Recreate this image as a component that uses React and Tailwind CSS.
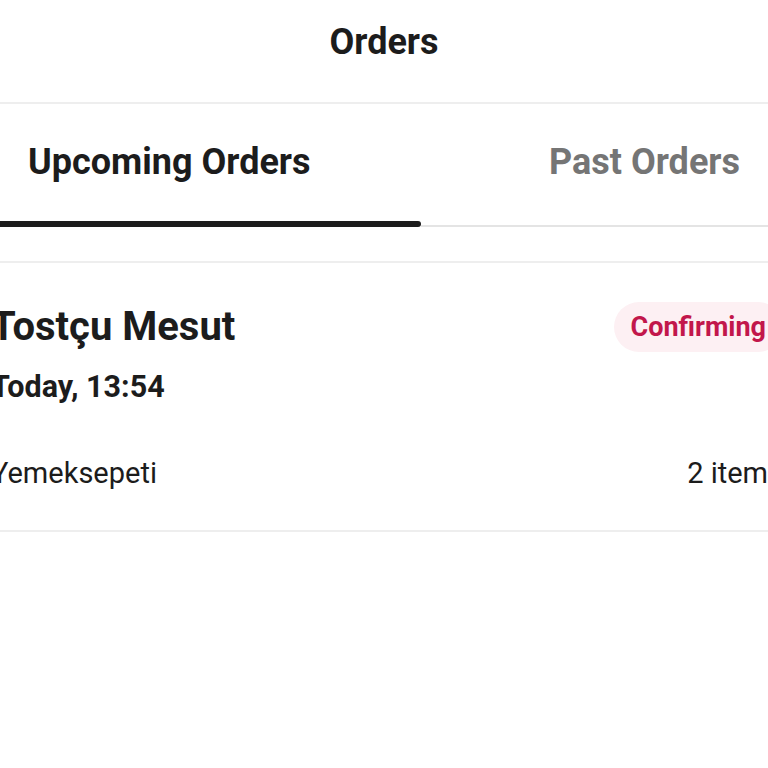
const OrderCard = ({ order }) => {
  return (
    <div className="border-b-2 border-[#eeeeee] pt-[39px] pb-[40px] ml-[-9px] mr-[-15px]">
      <div className="flex items-center justify-between">
        <span className="text-[40px] leading-[48px] font-bold text-[#1c1c1c]">{order.restaurant}</span>
        <span className="flex h-[50px] items-center rounded-full bg-[#fdf0f3] px-[17px] text-[27px] font-bold text-[#c2174b]">
          {order.status}
        </span>
      </div>
      <div className="mt-[17px] text-[30.5px] leading-[36px] font-bold text-[#1c1c1c]">{order.time}</div>
      <div className="mt-[51px] flex items-center justify-between text-[29px] leading-[34px] text-[#1c1c1c]">
        <span>{order.source}</span>
        <span>{order.items} items</span>
      </div>
    </div>
  );
};

const App = () => {
  const order = {
    restaurant: 'Tostçu Mesut',
    status: 'Confirming',
    time: 'Today, 13:54',
    source: 'Yemeksepeti',
    items: 2,
  };

  return (
    <div className="w-[768px] h-[768px] overflow-hidden bg-white font-['Roboto',sans-serif]">
      <header className="flex h-[104px] items-center justify-center border-b-2 border-[#eeeeee] pb-[18px]">
        <h1 className="text-[36px] font-bold text-[#1c1c1c]">Orders</h1>
      </header>

      <div className="flex h-[123px]">
        <div className="flex w-[421px] flex-col">
          <div className="flex flex-1 items-center pl-[28px] pb-[2px]">
            <span className="text-[36px] font-bold text-[#1c1c1c]">Upcoming Orders</span>
          </div>
          <div className="h-[6px] rounded-r-full bg-[#1c1c1c]" />
        </div>
        <div className="flex flex-1 flex-col">
          <div className="flex flex-1 items-center justify-end pr-[28px] pb-[6px]">
            <span className="text-[36px] font-bold text-[#757575]">Past Orders</span>
          </div>
          <div className="h-[2px] bg-[#e4e4e4]" />
        </div>
      </div>

      <div className="h-[36px] border-b-2 border-[#eeeeee]" />

      <OrderCard order={order} />
    </div>
  );
};

export default App;
